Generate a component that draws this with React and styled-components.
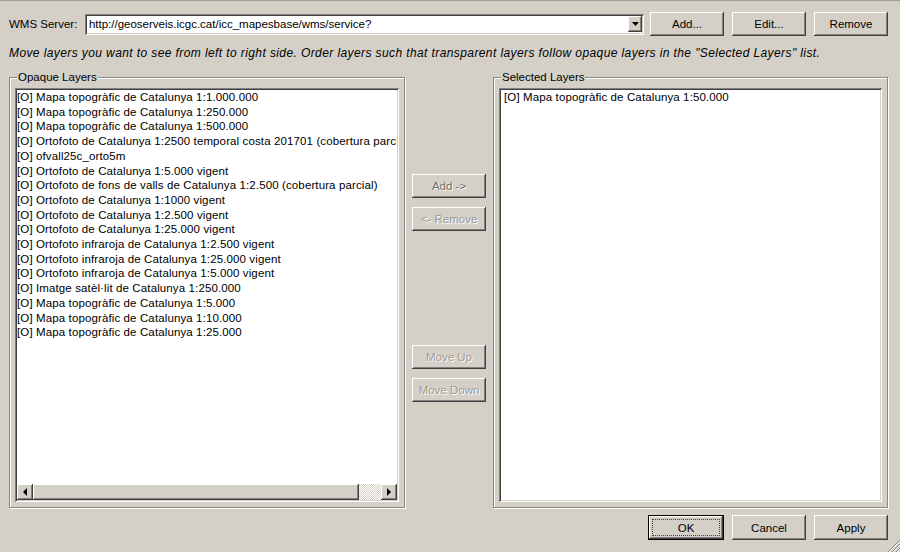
import React from "react";
import styled, { createGlobalStyle, css } from "styled-components";

const GlobalStyle = createGlobalStyle`
  html, body {
    margin: 0;
    padding: 0;
    background: #d4d0c8;
  }
  body {
    font-family: "Liberation Sans", Arial, sans-serif;
    font-size: 11px;
    color: #000;
  }
`;

const raised = css`
  box-shadow: inset -1px -1px 0 #404040, inset 1px 1px 0 #ffffff,
    inset -2px -2px 0 #808080, inset 2px 2px 0 #d4d0c8;
`;

const sunken = css`
  box-shadow: inset 1px 1px 0 #808080, inset -1px -1px 0 #ffffff,
    inset 2px 2px 0 #404040, inset -2px -2px 0 #d4d0c8;
`;

const Window = styled.div`
  position: relative;
  width: 900px;
  height: 552px;
  box-sizing: border-box;
  border-top: 1px solid #a09c94;
  padding: 11px 12px 12px 9px;
  display: flex;
  flex-direction: column;
  background: #d4d0c8;
  overflow: hidden;
`;

const ServerRow = styled.div`
  display: flex;
  align-items: center;
  height: 24px;
`;

const Label = styled.span`
  width: 76px;
  white-space: nowrap;
  font-size: 11.5px;
`;

const Combo = styled.div`
  width: 560px;
  height: 21px;
  box-sizing: border-box;
  background: #fff;
  ${sunken};
  display: flex;
  align-items: center;
  padding: 2px 2px 2px 4px;
  margin-right: 6px;
`;

const ComboText = styled.span`
  flex: 1;
  white-space: nowrap;
  overflow: hidden;
  font-size: 11.5px;
`;

const ComboArrow = styled.div`
  width: 14px;
  height: 16px;
  box-sizing: border-box;
  background: #d4d0c8;
  ${raised};
  display: flex;
  align-items: center;
  justify-content: center;
`;

const ButtonGroup = styled.div`
  display: flex;
  gap: ${(p) => p.$gap || 8}px;
  margin-left: ${(p) => (p.$push ? "auto" : "0")};
`;

const Button = styled.button`
  width: 74px;
  height: ${(p) => p.$h || 24}px;
  box-sizing: border-box;
  border: none;
  padding: 0;
  background: #d4d0c8;
  font-family: "Liberation Sans", Arial, sans-serif;
  font-size: 11.5px;
  color: ${(p) => p.$color || "#000"};
  ${(p) =>
    p.$disabled &&
    css`
      text-shadow: 1px 1px 0 #fff;
    `}
  ${raised};
  position: relative;
  cursor: default;
`;

const DefaultButton = styled(Button)`
  box-shadow: inset 0 0 0 1px #000, inset -2px -2px 0 #404040,
    inset 2px 2px 0 #ffffff, inset -3px -3px 0 #808080;
  &::after {
    content: "";
    position: absolute;
    inset: 4px;
    border: 1px dotted #404040;
  }
`;

const Hint = styled.div`
  margin-top: 11px;
  line-height: 13px;
  font-size: 12px;
  letter-spacing: 0.4px;
  font-style: italic;
  white-space: nowrap;
`;

const Main = styled.div`
  flex: 1;
  display: flex;
  gap: 7px;
  margin-top: 17px;
  min-height: 0;
`;

const Group = styled.div`
  position: relative;
  width: ${(p) => p.$w}px;
  box-sizing: border-box;
  border: 1px solid #888;
  box-shadow: inset 1px 1px 0 #fff, 1px 1px 0 #fff;
  padding: 10px 5px 5px 5px;
  display: flex;
`;

const GroupTitle = styled.span`
  position: absolute;
  top: -7px;
  left: 7px;
  padding: 0 1px;
  line-height: 13px;
  font-size: 11.5px;
  background: #d4d0c8;
  white-space: nowrap;
`;

const ListBox = styled.div`
  flex: 1;
  background: #fff;
  ${sunken};
  padding: 2px;
  display: flex;
  flex-direction: column;
  overflow: hidden;
`;

const Items = styled.div`
  flex: 1;
  padding-left: ${(p) => p.$pad || 0}px;
  overflow: hidden;
`;

const Item = styled.div`
  line-height: 14.7px;
  font-size: 11.5px;
  letter-spacing: 0.12px;
  white-space: nowrap;
`;

const HScroll = styled.div`
  height: 16px;
  display: flex;
  background: repeating-conic-gradient(#ffffff 0 25%, #d4d0c8 0 50%) 0 0 /
    2px 2px;
`;

const ScrollButton = styled.div`
  width: ${(p) => p.$w || 16}px;
  height: 16px;
  box-sizing: border-box;
  background: #d4d0c8;
  ${raised};
  display: flex;
  align-items: center;
  justify-content: center;
`;

const Track = styled.div`
  flex: 1;
`;

const Middle = styled.div`
  width: 74px;
  display: flex;
  flex-direction: column;
  gap: 9px;
  padding-top: 97px;
`;

const Spacer = styled.div`
  height: ${(p) => p.$h}px;
`;

const Footer = styled.div`
  display: flex;
  justify-content: flex-end;
  margin-top: 7px;
  height: 25px;
`;

const Grip = styled.svg`
  position: absolute;
  right: 0;
  bottom: 0;
`;

const opaqueLayers = [
  "[O] Mapa topogràfic de Catalunya 1:1.000.000",
  "[O] Mapa topogràfic de Catalunya 1:250.000",
  "[O] Mapa topogràfic de Catalunya 1:500.000",
  "[O] Ortofoto de Catalunya 1:2500 temporal costa 201701 (cobertura parcial)",
  "[O] ofvall25c_orto5m",
  "[O] Ortofoto de Catalunya 1:5.000 vigent",
  "[O] Ortofoto de fons de valls de Catalunya 1:2.500 (cobertura parcial)",
  "[O] Ortofoto de Catalunya 1:1000 vigent",
  "[O] Ortofoto de Catalunya 1:2.500 vigent",
  "[O] Ortofoto de Catalunya 1:25.000 vigent",
  "[O] Ortofoto infraroja de Catalunya 1:2.500 vigent",
  "[O] Ortofoto infraroja de Catalunya 1:25.000 vigent",
  "[O] Ortofoto infraroja de Catalunya 1:5.000 vigent",
  "[O] Imatge satèl·lit de Catalunya 1:250.000",
  "[O] Mapa topogràfic de Catalunya 1:5.000",
  "[O] Mapa topogràfic de Catalunya 1:10.000",
  "[O] Mapa topogràfic de Catalunya 1:25.000",
];

const selectedLayers = ["[O] Mapa topogràfic de Catalunya 1:50.000"];

const Triangle = ({ dir }) => {
  const pts = {
    down: "0,0 7,0 3.5,4",
    left: "4,0 4,8 0,4",
    right: "0,0 0,8 4,4",
  }[dir];
  const size = dir === "down" ? [7, 4] : [4, 8];
  return (
    <svg width={size[0]} height={size[1]} viewBox={`0 0 ${size[0]} ${size[1]}`}>
      <polygon points={pts} fill="#000" />
    </svg>
  );
};

export default function App() {
  return (
    <>
      <GlobalStyle />
      <Window>
        <ServerRow>
          <Label>WMS Server:</Label>
          <Combo>
            <ComboText>http://geoserveis.icgc.cat/icc_mapesbase/wms/service?</ComboText>
            <ComboArrow>
              <Triangle dir="down" />
            </ComboArrow>
          </Combo>
          <ButtonGroup $push>
            <Button>Add...</Button>
            <Button>Edit...</Button>
            <Button>Remove</Button>
          </ButtonGroup>
        </ServerRow>

        <Hint>
          Move layers you want to see from left to right side. Order layers such
          that transparent layers follow opaque layers in the "Selected Layers" list.
        </Hint>

        <Main>
          <Group $w={396}>
            <GroupTitle>Opaque Layers</GroupTitle>
            <ListBox>
              <Items>
                {opaqueLayers.map((l) => (
                  <Item key={l}>{l}</Item>
                ))}
              </Items>
              <HScroll>
                <ScrollButton>
                  <Triangle dir="left" />
                </ScrollButton>
                <ScrollButton $w={326} />
                <Track />
                <ScrollButton>
                  <Triangle dir="right" />
                </ScrollButton>
              </HScroll>
            </ListBox>
          </Group>

          <Middle>
            <Button $disabled $color="#6e6e6e">Add -&gt;</Button>
            <Button $disabled $color="#9c9a96">&lt;- Remove</Button>
            <Spacer $h={96} />
            <Button $disabled $color="#9c9a96">Move Up</Button>
            <Button $disabled $color="#9c9a96">Move Down</Button>
          </Middle>

          <Group $w={395}>
            <GroupTitle>Selected Layers</GroupTitle>
            <ListBox>
              <Items $pad={3}>
                {selectedLayers.map((l) => (
                  <Item key={l}>{l}</Item>
                ))}
              </Items>
            </ListBox>
          </Group>
        </Main>

        <Footer>
          <ButtonGroup>
            <DefaultButton $h={25} style={{ width: 76 }}>OK</DefaultButton>
            <Button $h={25}>Cancel</Button>
            <Button $h={25}>Apply</Button>
          </ButtonGroup>
        </Footer>

        <Grip width="16" height="16" viewBox="0 0 16 16">
          {[4, 8, 12].map((o) => (
            <g key={o}>
              <line x1={16 - o} y1="16" x2="16" y2={16 - o} stroke="#808080" strokeWidth="1" />
              <line x1={17 - o} y1="16" x2="16" y2={17 - o} stroke="#ffffff" strokeWidth="1" />
            </g>
          ))}
        </Grip>
      </Window>
    </>
  );
}
